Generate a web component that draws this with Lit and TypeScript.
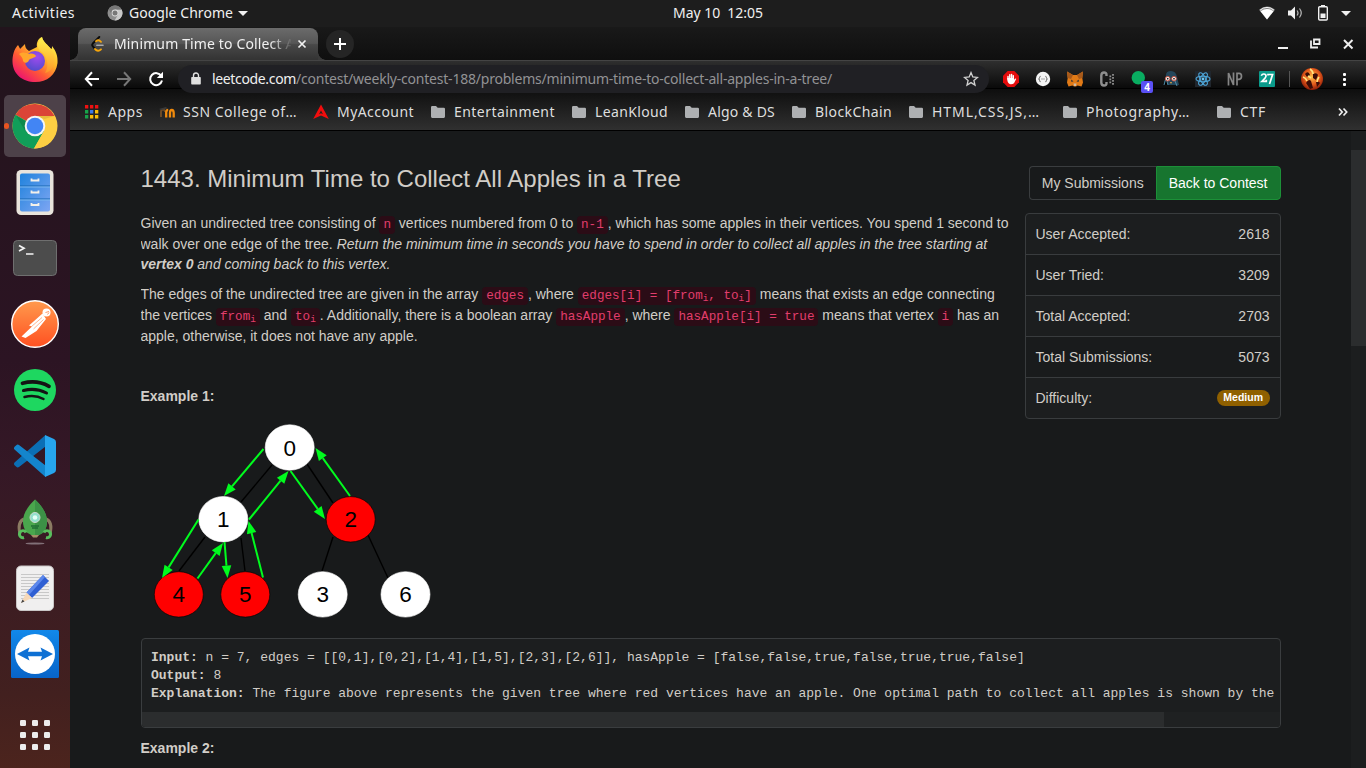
import { LitElement, html, css, svg } from "lit";
import { customElement, property } from "lit/decorators.js";

/* Text label that spreads its letters over a given advance width. */
@customElement("fit-label")
class FitLabel extends LitElement {
  @property() text = "";
  @property({ type: Number }) w = 0;
  static styles = css`
    :host { display: inline-block; white-space: pre; flex: none; }
  `;
  render() {
    return html`<span>${this.text}</span>`;
  }
  firstUpdated() {
    const span = this.renderRoot.querySelector("span") as HTMLElement;
    const natural = span.getBoundingClientRect().width;
    this.style.width = this.w + "px";
    this.style.letterSpacing = (this.w - natural) / this.text.length + "px";
  }
}

/* ---------- dock ---------- */
const firefox = svg`<svg viewBox="0 0 48 48" width="48" height="48">
  <defs>
    <linearGradient id="f1" x1="0.85" y1="0.1" x2="0.2" y2="0.95"><stop offset="0" stop-color="#fff04a"/><stop offset=".35" stop-color="#ffb429"/><stop offset=".65" stop-color="#ff5a35"/><stop offset="1" stop-color="#ec1271"/></linearGradient>
    <radialGradient id="f2" cx=".6" cy=".3" r=".8"><stop offset="0" stop-color="#a14bef"/><stop offset="1" stop-color="#4a4bc8"/></radialGradient>
    <linearGradient id="f3" x1="0" y1="0" x2="0" y2="1"><stop offset="0" stop-color="#fff44f"/><stop offset="1" stop-color="#ff9a2a"/></linearGradient>
  </defs>
  <path d="M7 9C8 11 9 12 9 13L14 8C14 11 15 13 18 15L26 11C25 6 28 2 31 1C32 6 37 9 40 13C41 13 41 12 41 10C45 15 47 20 46.500 27C45 39 36 46 24.500 46C11 46 2 38 1.500 26C1.300 20 3 13 7 9Z" fill="url(#f1)"/>
  <path d="M31 1C32 7 40 10 43 18C45 27 41 36 34 37C38 31 37 22 32 17C27 14 24 9 31 1Z" fill="url(#f3)" opacity=".85"/>
  <circle cx="24" cy="25" r="10" fill="url(#f2)"/>
  <path d="M8 18C12 15 16 17 18 18C21 17 24 18 25 20C24 22 20 22 18 24C17 27 14 28 12 25C12 22 10 20 8 18Z" fill="#ffa62b"/>
</svg>`;
const chrome = svg`<svg viewBox="0 0 48 48" width="48" height="48">
  <circle cx="24" cy="24" r="22.500" fill="#fdce43"/>
  <path d="M24 24L4.500 12.800A22.500 22.500 0 0 1 43.500 14H24Z" fill="#db4437"/>
  <path d="M24 24L4.500 12.800A22.500 22.500 0 0 0 23 46.500L33 29Z" fill="#119e59"/>
  <path d="M24 14H43.500A22.500 22.500 0 0 1 23 46.500L33 29Z" fill="#fdce43"/>
  <path d="M24 14h19.500l-10 3z" fill="#d9b03a" opacity=".6"/>
  <path d="M5 13.500l9.500 16 2-9z" fill="#0b7a43" opacity=".6"/>
  <circle cx="24" cy="24" r="10.300" fill="#f5f5f5"/><circle cx="24" cy="24" r="8.300" fill="#4285f4"/>
</svg>`;
const files = svg`<svg viewBox="0 0 48 48" width="48" height="48">
  <defs><linearGradient id="fi" x1="0" y1="0" x2="1" y2="1"><stop offset="0" stop-color="#1f82dc"/><stop offset="1" stop-color="#7ea6f3"/></linearGradient></defs>
  <rect x="5.500" y="2" width="37" height="45" rx="4.500" fill="#e9e4dc"/>
  <rect x="9" y="5.500" width="30" height="38" rx="2" fill="url(#fi)"/>
  <path d="M9 18h30M9 31h30" stroke="#1766b0"/><path d="M9 19h30M9 32h30" stroke="#7db8f0"/>
  <g fill="none" stroke="#f3f0ea" stroke-width="1.800"><path d="M20.500 10.500v2h7v-2M20.500 22.500v2h7v-2M20.500 35v2h7v-2"/></g>
</svg>`;
const terminal = svg`<svg viewBox="0 0 48 48" width="48" height="48">
  <rect x="2.500" y="6.500" width="43" height="35" rx="4" fill="#4c4c4c" stroke="#6f6f6f"/>
  <path d="M8 11.500l5 2.700-5 2.700M15 20h7.500" fill="none" stroke="#f5f5f5" stroke-width="1.700"/>
</svg>`;
const postman = svg`<svg viewBox="0 0 48 48" width="48" height="48">
  <defs><linearGradient id="pm" x1="0" y1="0" x2="0" y2="1"><stop offset="0" stop-color="#ff9a4d"/><stop offset="1" stop-color="#ff5021"/></linearGradient></defs>
  <circle cx="24" cy="24" r="23.300" fill="url(#pm)" stroke="#fff" stroke-width="1.400"/>
  <circle cx="35.500" cy="12.500" r="4" fill="#fff"/><path d="M34.500 12.500l3.500-1M36.500 14.500l1.500-2" stroke="#ff7b3c" stroke-width=".8"/>
  <path d="M31.500 13.500L18 25.500L21 26.500L10.500 36.500L14.500 38L25.500 31L35 19Z" fill="#fff"/>
  <path d="M20.500 26.500l10.500-9M22.500 29l10-9.500" stroke="#ff8444" stroke-width=".6"/>
</svg>`;
const spotify = svg`<svg viewBox="0 0 48 48" width="48" height="48">
  <circle cx="24" cy="24" r="21" fill="#1ed760"/>
  <g fill="none" stroke="#141414" stroke-linecap="round"><path d="M11.500 17.300C20 15 30 15.800 38 20.300" stroke-width="3.700"/><path d="M12.500 24.500C20 22.500 28.500 23.300 35.500 27" stroke-width="3.100"/><path d="M13.500 31C20 29.500 27 30 32.500 33" stroke-width="2.500"/></g>
</svg>`;
const vscode = svg`<svg viewBox="0 0 48 48" width="48" height="48">
  <path d="M3.500 30.500L34.500 3V14.500L8 35Q6.500 36 5 34.500L3.300 33Q2.500 31.500 3.500 30.500Z" fill="#0b6fb5"/>
  <path d="M3.500 17.500L34.500 45V33.500L8 13Q6.500 12 5 13.500L3.300 15Q2.500 16.500 3.500 17.500Z" fill="#1485cc"/>
  <path d="M34 3L43 7Q45 8 45 10V38Q45 40 43 41L34 45Z" fill="#27a5ee"/>
</svg>`;
const rocket = svg`<svg viewBox="0 0 48 48" width="48" height="48">
  <ellipse cx="24" cy="45.500" rx="9.500" ry="1" fill="#817078"/>
  <g fill="none" stroke="#8b7b62" stroke-width="3"><path d="M13 21Q6 24 9 36M35 21Q42 24 39 36"/></g>
  <path d="M24 1.500C14 11 8 22 15 34Q24 41 33 34C40 22 34 11 24 1.500Z" fill="#4aa64d"/>
  <path d="M24 1.500C34 11 40 22 33 34Q28 38 24 38Z" fill="#3c9146"/>
  <g fill="none" stroke="#58bd5c" stroke-width="3"><path d="M15 34.500A3.500 3.500 0 1 0 13 39.500M33 34.500A3.500 3.500 0 1 1 35 39.500"/></g>
  <path d="M20 37h8l-2 2.500h-4z" fill="#a68f68"/><path d="M20 28h8M21 30h6" stroke="#1f6d35" stroke-width="1.300"/>
  <circle cx="24" cy="19.500" r="5" fill="#92e0cd" stroke="#cdd9d0"/><circle cx="24" cy="19.500" r="2.300" fill="#e3fff6"/>
</svg>`;
const editor = svg`<svg viewBox="0 0 48 48" width="48" height="48">
  <rect x="5.500" y="2" width="37" height="44.500" rx="4.500" fill="#f0efef" stroke="#c9c6c6"/>
  <path d="M10 10.500h28M10 13.500h28M10 16.500h28M10 19.500h28M10 22.500h28M10 25.500h28M10 28.500h28M10 31.500h28M10 34.500h28" stroke="#c8c8c8"/>
  <path d="M32 11L38 17L21 34L15.500 28.500Z" fill="#2f5fd3"/><path d="M32 11l2 2L18 31l-2.500-2.500Z" fill="#5c88ec"/>
  <path d="M15.500 28.500L21 34L10 39Z" fill="#f6d8b8"/><path d="M11.500 35.500l2 2L10 39Z" fill="#444"/>
</svg>`;
const teamviewer = svg`<svg viewBox="0 0 48 48" width="48" height="48">
  <defs><linearGradient id="tv" x1="0" y1="0" x2="0" y2="1"><stop offset="0" stop-color="#1188ea"/><stop offset="1" stop-color="#0864c8"/></linearGradient></defs>
  <rect width="48" height="48" rx="1.500" fill="url(#tv)"/><circle cx="24" cy="24" r="20" fill="#fff"/>
  <path d="M6 24L18.500 17.500L17 21.800H31L29.500 17.500L42 24L29.500 30.500L31 26.200H17L18.500 30.500Z" fill="#0e70d4"/>
</svg>`;
const appsGrid = svg`<svg viewBox="0 0 48 48" width="48" height="48"><g fill="#ececec">
  ${[9, 21, 33].map((y) => [9, 21, 33].map((x) => svg`<rect x=${x} y=${y} width="6" height="6" rx="1.300"/>`))}
</g></svg>`;

/* ---------- browser icons ---------- */
const miniChrome = svg`<svg viewBox="0 0 16 16" width="16" height="16"><circle cx="8" cy="8" r="7.500" fill="#8e8e8e"/><path d="M8 4.500h6.600A7.500 7.500 0 0 1 7.600 15.500L11 9.800Z" fill="#c9c9c9"/><path d="M8 4.500h6.600A7.500 7.500 0 0 0 1.600 4.200L5 9.800Z" fill="#777"/><circle cx="8" cy="8" r="3.400" fill="#ddd"/><circle cx="8" cy="8" r="2.500" fill="#777"/></svg>`;
const leet = svg`<svg viewBox="0 0 16 16" width="16" height="16" fill="none" stroke-linecap="round"><path d="M9.300 1L2.800 7.500Q1.600 9 2.800 10.300L5.200 13" stroke="#0b0b0b" stroke-width="1.900"/><path d="M5 13Q8 16.300 11 13.300M6 5.200Q8.500 3.200 11 5.800" stroke="#f5a50b" stroke-width="1.900"/><path d="M6.800 9.300h6.200" stroke="#aaa" stroke-width="1.600"/></svg>`;
const folder = svg`<svg viewBox="0 0 16 16" width="16" height="16"><path d="M1 3.200Q1 2 2.200 2H6l1.700 1.800h6.100Q15 3.800 15 5v7.600Q15 14 13.800 14H2.200Q1 14 1 12.600Z" fill="#aeb0b2"/></svg>`;
const bmApps = svg`<svg viewBox="0 0 16 16" width="16" height="16">
  ${["#e11", "#e11", "#e11", "#17a34a", "#3c78e8", "#fbbc05", "#17a34a", "#fbbc05", "#fbbc05"].map(
    (c, i) => svg`<rect x=${1 + (i % 3) * 5} y=${1 + Math.floor(i / 3) * 5} width="3.300" height="3.500" fill=${c}/>`
  )}</svg>`;
const moodle = svg`<svg viewBox="0 0 16 16" width="16" height="16" fill="none"><path d="M2 13V8Q2 5.500 4 5.500T6 8" stroke="#6b4a27" stroke-width="2"/><path d="M7.200 13.500V8.500Q7.200 5.800 9.200 5.800M11 13.500V9Q11 6 12.800 6T14.700 9V13.500" stroke="#f08a0c" stroke-width="2.300"/><path d="M0 5L7 3l1.500 1.500L2 6Z" fill="#3a3a3a"/></svg>`;
const amrita = svg`<svg viewBox="0 0 16 16" width="16" height="16"><path d="M8 .5L15.800 15L8 11.500L.2 15Z" fill="#f20d0d"/><path d="M8 6.500L10 10.200 8 9.300 6 10.200Z" fill="#222"/></svg>`;

const folderMark = (text: string, w: number, box: number) => ({ icon: folder, text, w, box });
const bookmarks = [
  { icon: bmApps, text: "Apps", w: 35, box: 35 },
  { icon: moodle, text: "SSN College of…", w: 114, box: 114 },
  { icon: amrita, text: "MyAccount", w: 77, box: 77 },
  folderMark("Entertainment", 101, 101),
  folderMark("LeanKloud", 73, 73),
  folderMark("Algo & DS", 67, 67),
  folderMark("BlockChain", 77, 77),
  folderMark("HTML,CSS,JS,…", 108, 114),
  folderMark("Photography…", 104, 114),
  folderMark("CTF", 26, 26),
];

const extensions = [
  svg`<svg viewBox="0 0 16 16" width="16" height="16"><path d="M4.700 0h6.600L16 4.700v6.600L11.300 16H4.700L0 11.300V4.700Z" fill="#e40c0c"/><path d="M5 8V5.500M6.800 7V3.800M8.600 7V3.500M10.300 8V4.600" stroke="#fff" stroke-width="1.400" stroke-linecap="round"/><path d="M4.300 7h6.700l.3 1.800 1-1.200q1-.3.900.5L11 12.300Q9.500 13.400 7.500 13.200 4.600 12.500 4.300 9Z" fill="#fff"/></svg>`,
  svg`<svg viewBox="0 0 16 16" width="16" height="16" fill="none"><circle cx="8" cy="8" r="7.200" fill="#f4f4f4"/><path d="M5.600 5.300Q4.600 5.300 4.600 6.500T3.600 8Q4.600 8 4.600 9.500T5.600 10.700M10.400 5.300Q11.400 5.300 11.400 6.500T12.400 8Q11.400 8 11.400 9.500T10.400 10.700" stroke="#444" stroke-width=".8"/><path d="M6.500 8h3" stroke="#555" stroke-dasharray="1 1"/></svg>`,
  svg`<svg viewBox="0 0 16 16" width="16" height="16"><path d="M0 .5L6 4h4L16 .5 15.300 7 16 11.500 14.500 15.500 10.500 14.500 9 15.500H7L5.500 14.500 1.500 15.500 0 11.500.7 7Z" fill="#e17a16"/><path d="M0 .5L6 4 4 8 .7 7ZM16 .5L10 4l2 4 3.300-1Z" fill="#a85a1b"/><path d="M4 8.500l2.500 1.800L4.500 11ZM12 8.500L9.500 10.300l2 .7Z" fill="#26323c"/><path d="M6.500 12.500h3l-.5 2.500H7Z" fill="#cbbba9"/></svg>`,
  svg`<svg viewBox="0 0 16 16" width="16" height="16" fill="none" stroke="#8f8f8f"><path d="M7.500 5V4Q7.500 1.500 5 1.500T2.300 4.500v7Q2.300 14.500 5 14.500T7.500 12V11" stroke-width="2.400"/><path d="M11.300 4.500v8M14 3v11" stroke-width="1.800" stroke-dasharray="1.800 1.200"/></svg>`,
  svg`<svg viewBox="0 0 16 16" width="16" height="16"><circle cx="7.300" cy="6.700" r="6.700" fill="#09ad61"/></svg>`,
  svg`<svg viewBox="0 0 16 16" width="16" height="16"><path d="M3 4Q3 0 8 0t6 6l2 8H1l1-6Z" fill="#24465a"/><path d="M1 14L3 7l2 7M12 10l2 5" stroke="#508ba6"/><circle cx="4.700" cy="7.700" r="2.300" fill="#fff" stroke="#c8503c"/><circle cx="11" cy="7.700" r="2.300" fill="#fff" stroke="#c8503c"/><circle cx="4.700" cy="7.700" r=".9" fill="#222"/><circle cx="11" cy="7.700" r=".9" fill="#222"/><path d="M7 11h2l-1 2Z" fill="#e7aa48"/></svg>`,
  svg`<svg viewBox="0 0 16 16" width="16" height="16" fill="none"><rect width="16" height="16" fill="#20262d"/><g stroke="#4da6d9" stroke-width="1.100"><ellipse cx="8" cy="8" rx="7" ry="2.700"/><ellipse cx="8" cy="8" rx="7" ry="2.700" transform="rotate(60 8 8)"/><ellipse cx="8" cy="8" rx="7" ry="2.700" transform="rotate(120 8 8)"/></g><circle cx="8" cy="8" r="1.400" fill="#6ac5f2"/></svg>`,
  svg`<svg viewBox="0 0 16 16" width="16" height="16" fill="none" stroke="#858585" stroke-width="1.700"><path d="M1.500 14.500V2L6.500 14V1.500M10 14.500V2.400h2.200Q14.500 2.400 14.500 5.200T12.200 8.300H10"/></svg>`,
  svg`<svg viewBox="0 0 16 16" width="16" height="16"><rect width="16" height="16" rx="1" fill="#0a9b8b"/><path d="M2.300 4.800Q3 3 4.800 3 7 3 7 5 7 6.500 3 10.300H7.300V8.800M9 4.600V3.500h4.600L10.500 13" fill="none" stroke="#fff" stroke-width="1.700"/></svg>`,
];
const star = svg`<svg viewBox="0 0 16 16" width="16" height="16"><path d="M8 1.600L9.800 6l4.700.4-3.600 3.100 1.100 4.600L8 11.600 4 14.100l1.100-4.600L1.500 6.400 6.200 6Z" fill="none" stroke="#d0d0d0" stroke-width="1.300"/></svg>`;
const avatar = svg`<svg viewBox="0 0 22 22" width="22" height="22">
  <defs><radialGradient id="av" cx=".5" cy=".4" r=".6"><stop offset="0" stop-color="#ffc04a"/><stop offset=".6" stop-color="#e0561a"/><stop offset="1" stop-color="#8a1c08"/></radialGradient></defs>
  <circle cx="11" cy="11" r="11" fill="url(#av)"/>
  <path d="M4 6Q6 3 8 5l1 2-3 2ZM12 6q4-2 5 1l-2 5-3-2ZM5 15q3-5 5-2l2 7-3 1ZM15 14q3-1 4 1l-3 4Z" fill="#3a0c07"/>
  <path d="M9 1q3 2 3 5M2 9q3 1 4 4M18 9q-2 3-2 5M7 8l3 2" stroke="#ffe480" stroke-width="1.600" fill="none"/></svg>`;

const back = (dir: number, c: string) => svg`<svg viewBox="0 0 16 16" width="16" height="16"><path transform=${dir < 0 ? "translate(16 0) scale(-1 1)" : ""} d="M8 1.300L1.800 8 8 14.700M1.800 8H15" fill="none" stroke=${c} stroke-width="2"/></svg>`;

/* ---------- tree figure ---------- */
const nodes: [string, number, number, string][] = [
  ["0", 149.7, 32.5, "#fff"], ["1", 83.3, 104.2, "#fff"], ["2", 210.7, 104.3, "#f00"],
  ["4", 38.8, 179.4, "#f00"], ["5", 105.3, 179.4, "#f00"], ["3", 182.7, 179.4, "#fff"], ["6", 265.5, 179.4, "#fff"],
];
const edges = [[132, 50, 101, 87], [167, 49, 193, 88], [65, 122, 39, 156], [101, 123, 105, 156], [193, 122, 182, 156], [228, 120, 248, 163]];
const arrows = [
  [123.5, 34, 84, 81], [109, 104.500, 148.500, 56], [150.5, 56, 185, 104], [210, 81, 175.500, 33],
  [58.5, 104.500, 22, 163], [57.5, 163.500, 83, 128], [84.5, 127, 87.500, 163], [123, 162.500, 108.500, 106],
];
const arrow = ([x1, y1, x2, y2]: number[]) => {
  const l = Math.hypot(x2 - x1, y2 - y1);
  const ux = (x2 - x1) / l, uy = (y2 - y1) / l;
  const bx = x2 - ux * 12.5, by = y2 - uy * 12.5;
  return svg`<path d=${`M${x1} ${y1}L${bx} ${by}`} stroke="#00fc1e" stroke-width="2"/>
  <path d=${`M${x2} ${y2}L${bx - uy * 4.8} ${by + ux * 4.8}L${bx + uy * 4.8} ${by - ux * 4.8}Z`} fill="#00fc1e"/>`;
};
const tree = svg`<svg viewBox="0 0 300 210" width="300" height="210">
  ${edges.map(([a, b, c, d]) => svg`<path d=${`M${a} ${b}L${c} ${d}`} stroke="#000" stroke-width="1.400"/>`)}
  ${nodes.map(([t, x, y, f]) => svg`<ellipse cx=${x} cy=${y} rx="24.500" ry="22.700" fill=${f} stroke=${f === "#fff" ? "#fff" : "#000"} stroke-width=".6"/>
    <text x=${x} y=${y + 8} text-anchor="middle" font-family="Liberation Sans, sans-serif" font-size="22.500" fill="#000">${t}</text>`)}
  ${arrows.map(arrow)}
</svg>`;

@customElement("app-root")
class AppRoot extends LitElement {
  static styles = css`
    :host { display: flex; flex-direction: column; width: 1366px; height: 768px; overflow: hidden; background: #181a1b; font: 14px/20px "Liberation Sans", Arial, sans-serif; color: #d1cdc7; }
    * { box-sizing: border-box; }
    svg { display: block; flex: none; }
    .ui { font-family: "Noto Sans", sans-serif; color: #f0f0f0; }
    .panel { height: 27px; padding-bottom: 1px; flex: none; background: #1d1d1d; display: grid; grid-template-columns: 1fr auto 1fr; align-items: center; }
    .panel-left { display: flex; align-items: center; padding-left: 12px; }
    .panel-left svg:nth-of-type(1) { margin: 0 6px 0 32px; }
    .caret { border: 5px solid transparent; border-top-color: #f0f0f0; border-bottom: 0; margin-left: 5px; }
    .clock { padding-left: 70px; }
    .panel-right { display: flex; justify-content: flex-end; align-items: center; gap: 12px; padding-right: 15px; }
    .panel-right .caret { margin: 0 0 0 -2px; }
    .body { display: flex; flex: 1; min-height: 0; }
    .dock { width: 70px; flex: none; padding-top: 2px; display: flex; flex-direction: column; align-items: center; gap: 4px; background: linear-gradient(#22141c, #2c1423 45%, #351826 60%, #42201f 90%, #4c241d); }
    .tile { position: relative; width: 62px; height: 62px; flex: none; display: flex; align-items: center; justify-content: center; border-radius: 5px; }
    .tile.active { background: #4d4149; }
    .tile.active::before { content: ""; position: absolute; left: 0; top: 28px; width: 5px; height: 6px; border-radius: 3px; background: #e95420; }
    .tile.last { margin-top: 15px; }
    .win { flex: 1; min-width: 0; display: flex; flex-direction: column; }
    .strip { height: 33px; flex: none; display: flex; align-items: center; background: linear-gradient(#191919, #0f0f0f); padding: 1px 10px 0 8px; }
    .tab { position: relative; width: 240px; height: 32px; border-radius: 8px 8px 0 0; background: linear-gradient(#6b6b6b, #565656 48%, #484848 52%, #333); display: flex; align-items: center; padding-left: 12px; }
    .tab::before, .tab::after { content: ""; position: absolute; bottom: 0; width: 8px; height: 8px; }
    .tab::before { left: -8px; background: radial-gradient(circle at 0 0, transparent 7.500px, #3a3a3a 8px); }
    .tab::after { right: -8px; background: radial-gradient(circle at 100% 0, transparent 7.500px, #3a3a3a 8px); }
    .tab-title { margin-left: 8px; width: 177px; overflow: hidden; display: flex; -webkit-mask-image: linear-gradient(90deg, #000 88%, transparent 101%); mask-image: linear-gradient(90deg, #000 88%, transparent 101%); }
    .tab-close { margin-left: 4px; }
    .plus { width: 28px; height: 28px; border-radius: 50%; background: #252525; margin-left: 8px; display: flex; align-items: center; justify-content: center; }
    .controls { margin-left: auto; display: flex; gap: 16.500px; padding-top: 0; }
    .bars { height: 71px; flex: none; background: linear-gradient(#444 0 1px, transparent 1px), linear-gradient(#000, #000) 0 28px / 100% 1px no-repeat, linear-gradient(#000, #000) 0 70px / 100% 1px no-repeat, linear-gradient(#303030, #0a0a0a) 0 0 / 100% 28px no-repeat, linear-gradient(#0e0e0e, #303030) 0 29px / 100% 41px no-repeat; }
    .toolbar { height: 38px; display: flex; align-items: center; padding-left: 14px; }
    .toolbar > svg { margin-right: 16px; }
    .omni { width: 811px; height: 28px; margin-left: -2px; flex: none; border-radius: 14px; background: #202024; display: flex; align-items: center; padding: 0 10px 0 10px; }
    .omni .lock { margin-right: 8px; }
    .omni .path { color: #929294; }
    .omni .star { margin-left: auto; }
    .ext { display: flex; padding-left: 6px; }
    .ext-cell { position: relative; width: 32px; display: flex; justify-content: center; }
    .badge { position: absolute; left: 18px; top: 10px; width: 12px; height: 12px; border-radius: 2px; background: #5a50f5; color: #fff; font: bold 10px/12px "Noto Sans", sans-serif; text-align: center; }
    .sep { width: 1px; height: 16px; background: #555; margin-left: 6px; }
    .toolbar > .avatar { margin-left: 11px; }
    .toolbar > .dots { margin: 0 0 0 14px; }
    .marks { height: 33px; display: flex; align-items: center; gap: 16px; padding: 0 0 5px 14px; }
    .mark { display: flex; align-items: center; gap: 8px; flex: none; color: #dedede; }
    .more { margin-left: auto; margin-right: 9px; }
    .page { flex: 1; min-height: 0; display: flex; background: #181a1b; }
    .content { width: 1140px; flex: none; margin-left: 70.500px; margin-right: 70.500px; overflow: hidden; }
    .head { display: flex; justify-content: space-between; padding-top: 35px; height: 69px; }
    h3 { font-size: 24px; line-height: 26px; font-weight: 400; margin: 0; }
    .btns { display: flex; }
    .btn { height: 34px; padding: 6px 12px; border: 1px solid #3a3d3f; border-radius: 4px 0 0 4px; border-right: 0; }
    .btn.go { background: #17752f; border: 1px solid #1c9038; color: #fff; border-radius: 0 4px 4px 0; }
    .top { display: flex; justify-content: space-between; align-items: flex-start; }
    .text { width: 870px; padding-top: 13px; }
    p { margin: 0 0 10px; }
    .it { font-style: italic; }
    code { font: 12.6px/18px "Liberation Mono", monospace; padding: 2px 4px; background: #2b0c16; color: #e23e6c; border-radius: 4px; }
    code sub { font-size: 75%; line-height: 0; position: relative; vertical-align: baseline; bottom: -0.25em; }
    .stats { width: 256px; margin-top: 13px; border: 1px solid #393c3e; border-radius: 4px; background: #1c1e1f; }
    .stat { height: 41px; padding: 10px; display: flex; justify-content: space-between; border-bottom: 1px solid #393c3e; }
    .stat:nth-child(even) { background: #191b1c; }
    .stat:last-child { border-bottom: 0; height: 40px; }
    .pill { align-self: center; background: #8f6000; color: #fff; font-weight: 700; font-size: 10.500px; line-height: 15px; height: 16px; padding: 0 6.500px; border-radius: 8px; }
    .fig { height: 223px; margin: -4px 0 0 -0.500px; }
    .pre { width: 1140px; height: 90px; border: 1px solid #3a3d3f; border-radius: 4px; background: #1c1e1f; display: flex; flex-direction: column; overflow: hidden; margin-bottom: 10px; }
    pre { margin: 0; padding: 9.500px 0 0 9.500px; flex: 1; font: 13px/18px "Liberation Mono", monospace; }
    .hbar { height: 15px; background: #1f2122; flex: none; }
    .hthumb { width: 1022px; height: 15px; background: #2b2d2e; }
    .vbar { flex: 1; background: #1c1e1f; padding-top: 19px; }
    .vthumb { height: 196px; background: #2b2d2e; }
  `;

  render() {
    return html`
      <div class="panel ui">
        <div class="panel-left">
          <fit-label text="Activities" w="63"></fit-label>${miniChrome}
          <fit-label text="Google Chrome" w="104"></fit-label><span class="caret"></span>
        </div>
        <div class="clock"><fit-label text="May 10  12:05" w="90"></fit-label></div>
        <div class="panel-right">
          <svg viewBox="0 0 16 16" width="16" height="16"><path d="M0 4.800Q8-1.600 16 4.800L8 14.500Z" fill="#888"/><path d="M1.500 6.200Q8 1.800 14.500 6.200L8 14.500Z" fill="#fff"/><path d="M1 5.200Q8-.4 15 5.200" fill="none" stroke="#f3f3f3"/></svg>
          <svg viewBox="0 0 16 16" width="16" height="16"><path d="M1 5.500h3l4-4v13l-4-4H1Z" fill="#f0f0f0"/><path d="M10 5.500q2 2.500 0 5M12.500 3.500q3.500 4.500 0 9" fill="none" stroke="#bbb" stroke-width="1.200"/></svg>
          <svg viewBox="0 0 16 16" width="16" height="16"><path d="M6 0h4v2H6Z" fill="#f0f0f0"/><rect x="3.700" y="1.700" width="8.600" height="13.300" rx="1" fill="none" stroke="#f0f0f0" stroke-width="1.400"/><path d="M5.500 8.500h5v4.500h-5Z" fill="#f0f0f0"/></svg>
          <span class="caret"></span>
        </div>
      </div>
      <div class="body">
        <div class="dock">
          ${[firefox, chrome, files, terminal, postman, spotify, vscode, rocket, editor, teamviewer].map(
            (i, n) => html`<div class="tile ${n === 1 ? "active" : ""}">${i}</div>`
          )}
          <div class="tile last">${appsGrid}</div>
        </div>
        <div class="win">
          <div class="strip ui">
            <div class="tab">
              ${leet}
              <div class="tab-title"><fit-label text="Minimum Time to Collect All" w="188"></fit-label></div>
              <svg class="tab-close" viewBox="0 0 16 16" width="16" height="16"><path d="M3.500 4.500l7 7M10.500 4.500l-7 7" stroke="#f2f2f2" stroke-width="1.700"/></svg>
            </div>
            <div class="plus"><svg viewBox="0 0 14 14" width="14" height="14"><path d="M7 1v12M1 7h12" stroke="#fff" stroke-width="2"/></svg></div>
            <div class="controls">
              <svg viewBox="0 0 16 16" width="16" height="16"><path d="M3 11h10v2H3Z" fill="#eee"/></svg>
              <svg viewBox="0 0 16 16" width="16" height="16" fill="none" stroke="#eee"><path d="M6 3.500h5.500v4.500H6Z" stroke-width="1.800"/><path d="M3 4.500v7h7" stroke-width="1.800"/></svg>
              <svg viewBox="0 0 16 16" width="16" height="16"><path d="M4 4l8.500 8.500M12.500 4L4 12.500" stroke="#eee" stroke-width="2"/></svg>
            </div>
          </div>
          <div class="bars ui">
            <div class="toolbar">
              ${back(1, "#fff")}${back(-1, "#777")}
              <svg viewBox="0 0 16 16" width="16" height="16"><path d="M13.300 5A6 6 0 1 0 14 9.500" fill="none" stroke="#fff" stroke-width="2"/><path d="M15 .8V7H8.800Z" fill="#fff"/></svg>
              <div class="omni">
                <svg class="lock" viewBox="0 0 16 16" width="16" height="16"><path d="M4 6h8q.8 0 .8.800v6q0 .8-.8.800H4q-.8 0-.8-.800v-6Q3.200 6 4 6Z" fill="#e0e0e0"/><path d="M5.500 6V4.500a2.500 2.500 0 0 1 5 0V6" fill="none" stroke="#e0e0e0" stroke-width="1.400"/></svg>
                <fit-label text="leetcode.com" w="84"></fit-label><fit-label class="path" text="/contest/weekly-contest-188/problems/minimum-time-to-collect-all-apples-in-a-tree/" w="536"></fit-label>
                <div class="star">${star}</div>
              </div>
              <div class="ext">
                ${extensions.map((e, n) => html`<div class="ext-cell">${e}${n === 4 ? html`<span class="badge">4</span>` : ""}</div>`)}
              </div>
              <div class="sep"></div>
              <div class="avatar">${avatar}</div>
              <svg class="dots" viewBox="0 0 16 16" width="16" height="16" fill="#fff"><rect x="6" y="2" width="3" height="3" rx="1"/><rect x="6" y="7" width="3" height="3" rx="1"/><rect x="6" y="12" width="3" height="3" rx="1"/></svg>
            </div>
            <div class="marks">
              ${bookmarks.map((b) => html`<div class="mark" style="width:${b.box + 24}px">${b.icon}<fit-label .text=${b.text} .w=${b.w}></fit-label></div>`)}
              <svg class="more" viewBox="0 0 10 10" width="28" height="10"><path d="M1 1.500L4.200 5 1 8.500M5.500 1.500L8.700 5 5.500 8.500" fill="none" stroke="#eee" stroke-width="1.700"/></svg>
            </div>
          </div>
          <div class="page">
            <div class="content">
              <div class="head">
                <h3>1443. Minimum Time to Collect All Apples in a Tree</h3>
                <div class="btns"><div class="btn">My Submissions</div><div class="btn go">Back to Contest</div></div>
              </div>
              <div class="top">
                <div class="text">
                  <p>Given an undirected tree consisting of <code>n</code> vertices numbered from 0 to <code>n-1</code>, which has some apples in their vertices. You spend 1 second to walk over one edge of the tree. <span class="it">Return the minimum time in seconds you have to spend in order to collect all apples in the tree starting at <b>vertex 0</b> and coming back to this vertex.</span></p>
                  <p>The edges of the undirected tree are given in the array <code>edges</code>, where <code>edges[i] = [from<sub>i</sub>, to<sub>i</sub>]</code> means that exists an edge connecting the vertices <code>from<sub>i</sub></code> and <code>to<sub>i</sub></code>. Additionally, there is a boolean array <code>hasApple</code>, where <code>hasApple[i] = true</code> means that vertex <code>i</code> has an apple, otherwise, it does not have any apple.</p>
                  <p>&nbsp;</p>
                  <p><b>Example 1:</b></p>
                </div>
                <div class="stats">
                  <div class="stat"><span>User Accepted:</span><span>2618</span></div>
                  <div class="stat"><span>User Tried:</span><span>3209</span></div>
                  <div class="stat"><span>Total Accepted:</span><span>2703</span></div>
                  <div class="stat"><span>Total Submissions:</span><span>5073</span></div>
                  <div class="stat"><span>Difficulty:</span><span class="pill">Medium</span></div>
                </div>
              </div>
              <div class="fig">${tree}</div>
              <div class="pre">
                <pre><b>Input:</b> n = 7, edges = [[0,1],[0,2],[1,4],[1,5],[2,3],[2,6]], hasApple = [false,false,true,false,true,true,false]
<b>Output:</b> 8
<b>Explanation:</b> The figure above represents the given tree where red vertices have an apple. One optimal path to collect all apples is shown by the</pre>
                <div class="hbar"><div class="hthumb"></div></div>
              </div>
              <p><b>Example 2:</b></p>
            </div>
            <div class="vbar"><div class="vthumb"></div></div>
          </div>
        </div>
      </div>
    `;
  }
}
